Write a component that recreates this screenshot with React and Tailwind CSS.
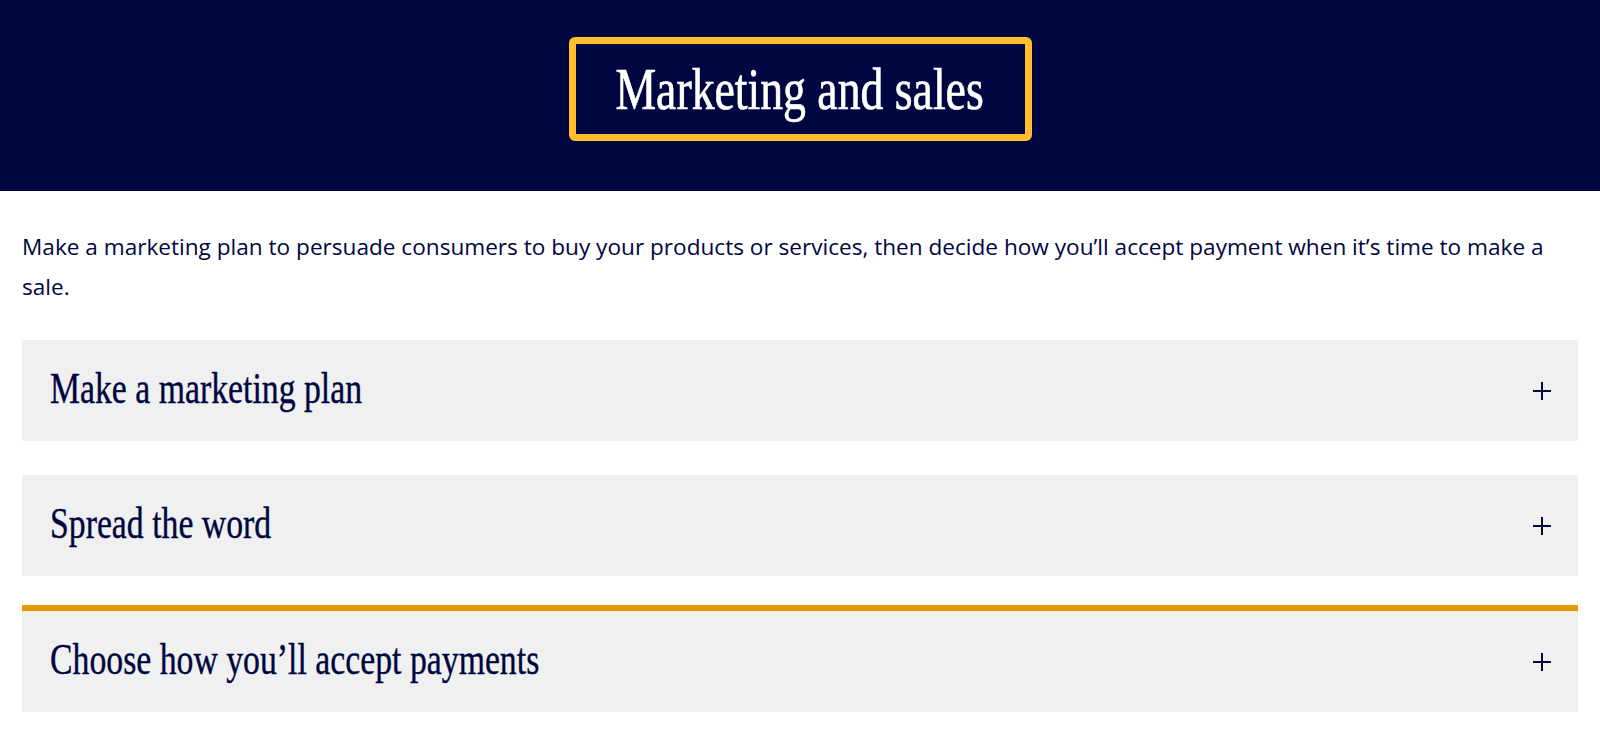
import React from "react";

const sections = [
  { title: "Make a marketing plan", active: false },
  { title: "Spread the word", active: false },
  { title: "Choose how you’ll accept payments", active: true },
];

function PlusIcon() {
  return (
    <svg width="18" height="18" viewBox="0 0 18 18" fill="none" stroke="currentColor" strokeWidth="2">
      <line x1="9" y1="0" x2="9" y2="18" />
      <line x1="0" y1="9" x2="18" y2="9" />
    </svg>
  );
}

function AccordionItem({ title, active, className }) {
  return (
    <button
      className={
        "flex w-full items-center justify-between bg-[#f0f0f0] pl-7 pr-[27px] text-left text-[#000640] " +
        (active ? "h-[107px] border-t-[6px] border-[#e59a00] " : "h-[101px] ") +
        className
      }
    >
      <span className="block font-['Liberation_Serif',serif] text-[45px] leading-none scale-x-[0.75] origin-left whitespace-nowrap pb-1 [-webkit-text-stroke:0.4px_#000640]">
        {title}
      </span>
      <PlusIcon />
    </button>
  );
}

export default function App() {
  return (
    <div className="min-h-screen bg-white">
      <header className="flex h-[191px] justify-center bg-[#000640] pt-[37px]">
        <div className="flex h-[104px] w-[463px] items-center justify-center rounded-md border-[7px] border-[#ffbe2e]">
          <h1 className="font-['Liberation_Serif',serif] text-[59px] leading-none text-white scale-x-[0.775] whitespace-nowrap [-webkit-text-stroke:0.7px_white]">
            Marketing and sales
          </h1>
        </div>
      </header>

      <main className="px-[22px]">
        <p className="mt-9 font-['Open_Sans',sans-serif] text-[22.6px] leading-10 text-[#000640]">
          Make a marketing plan to persuade consumers to buy your products or services, then decide how you’ll accept
          payment when it’s time to make a sale.
        </p>

        <div className="mt-[33px]">
          {sections.map((s, i) => (
            <AccordionItem
              key={s.title}
              title={s.title}
              active={s.active}
              className={i === 0 ? "" : s.active ? "mt-[29px]" : "mt-[34px]"}
            />
          ))}
        </div>
      </main>
    </div>
  );
}
